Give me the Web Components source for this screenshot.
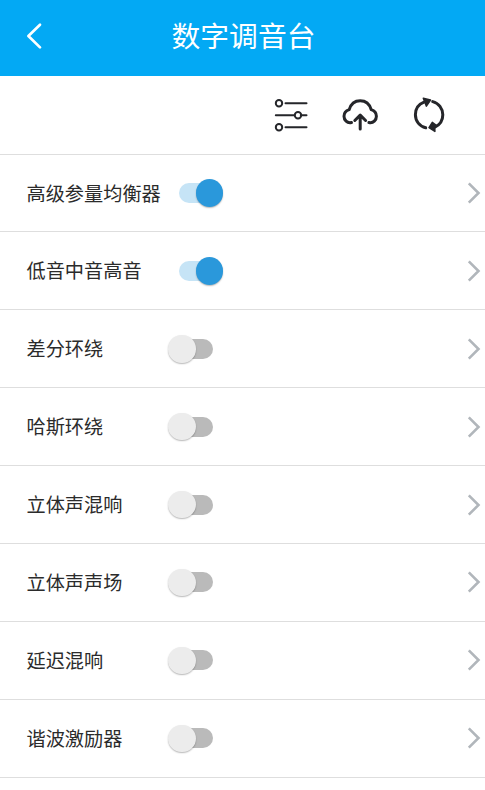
<!DOCTYPE html>
<html lang="zh-CN">
<head>
<meta charset="utf-8">
<meta name="viewport" content="width=device-width, initial-scale=1">
<title>数字调音台</title>
<style>
  body {
    margin: 0;
    background: #fff;
    color: #2b2b2b;
    font-family: "Noto Sans CJK SC", sans-serif;
  }
</style>
</head>
<body>
<mixer-page>
  <mixer-header slot="header">数字调音台</mixer-header>
  <mixer-toolbar slot="toolbar"></mixer-toolbar>
  <mixer-item on>高级参量均衡器</mixer-item>
  <mixer-item on>低音中音高音</mixer-item>
  <mixer-item>差分环绕</mixer-item>
  <mixer-item>哈斯环绕</mixer-item>
  <mixer-item>立体声混响</mixer-item>
  <mixer-item>立体声声场</mixer-item>
  <mixer-item>延迟混响</mixer-item>
  <mixer-item>谐波激励器</mixer-item>
</mixer-page>

<script>
function attach(host, html) {
  const template = document.createElement("template");
  template.innerHTML = html;
  host
    .attachShadow({ mode: "open" })
    .appendChild(template.content.cloneNode(true));
}

class MixerPage extends HTMLElement {
  constructor() {
    super();
    attach(this, `
      <style>
        :host { display: flex; flex-direction: column; height: 790px; overflow: hidden; }
      </style>
      <slot name="header"></slot>
      <slot name="toolbar"></slot>
      <slot></slot>
    `);
  }
}

customElements.define("mixer-page", MixerPage);

class MixerHeader extends HTMLElement {
  constructor() {
    super();
    attach(this, `
      <style>
        :host {
          display: grid;
          grid-template-columns: 60px 1fr 58px;
          align-items: center;
          flex: none;
          height: 76.4px;
          background: #03a9f4;
          color: #fff;
        }
        .title {
          font-size: 28.8px;
          line-height: 42px;
          text-align: center;
          padding-bottom: 7px;
          white-space: nowrap;
        }
        svg { display: block; margin: 0 0 5px 22px; }
      </style>
      <svg width="24" height="30" viewBox="0 0 24 30" fill="none" stroke="#fff" stroke-width="2.7" stroke-linecap="round" stroke-linejoin="round">
        <path d="M18 3.800 6.400 15 18 26.400"/>
      </svg>
      <div class="title"><slot></slot></div>
    `);
  }
}

customElements.define("mixer-header", MixerHeader);

class MixerToolbar extends HTMLElement {
  constructor() {
    super();
    attach(this, `
      <style>
        :host {
          display: flex;
          align-items: center;
          justify-content: flex-end;
          gap: 29px;
          flex: none;
          box-sizing: border-box;
          height: 78.2px;
          padding-right: 36px;
          border-bottom: 1px solid #dedede;
        }
        svg {
          display: block;
          fill: none;
          stroke: #25262a;
          stroke-linecap: round;
          stroke-linejoin: round;
        }
      </style>
      <svg width="40" height="40" viewBox="0 0 40 40" stroke-width="2">
        <path d="M14.500 8.300h21M4.800 20.300h18.400M29.800 20.300h5.700M14.500 32.300h21"/>
        <circle cx="8" cy="8.300" r="3.200"/>
        <circle cx="27" cy="20.300" r="3.200"/>
        <circle cx="8" cy="32.300" r="3.200"/>
      </svg>
      <svg width="40" height="40" viewBox="0 0 40 40" stroke-width="3">
        <path d="M11.500 27.500C7 28.500 4 25 4 21.200c0-3.500 2.200-5.500 5.200-6.500C11 8.500 15.300 5.800 20.200 5.800s9.200 2.700 11 8.900c3 1 5.200 3 5.200 6.500 0 3.800-3 7.300-7.500 6.300"/>
        <path d="M20.200 34V20.500M14.800 25.500l5.400-5.400 5.400 5.400"/>
      </svg>
      <svg width="40" height="40" viewBox="0 0 40 40" stroke-width="3">
        <path d="M16.700 32.800C10.600 31.400 6.400 26 6.400 19.800c0-5.800 3.400-10.600 8.600-12.600M23.700 6.600C29.600 8 33.800 13.500 33.800 19.800c0 5.600-3.300 10.400-8.300 12.500"/>
        <path fill="#25262a" stroke-width="1.500" d="m14.300 3.300 7.200 1.700-4.100 6.200zM20 32.600l5.900 3.800-.2-3.800 1.600-2.200-4-3z"/>
      </svg>
    `);
  }
}

customElements.define("mixer-toolbar", MixerToolbar);

class MixerSwitch extends HTMLElement {
  constructor() {
    super();
    this.setAttribute("role", "switch");
    attach(this, `
      <style>
        :host { display: flex; align-items: center; width: 55px; height: 28px; }
        .track {
          display: flex;
          align-items: center;
          box-sizing: border-box;
          width: 34px;
          height: 20px;
          margin: 0 auto;
          border-radius: 10px;
          background: #bababa;
        }
        .thumb {
          flex: none;
          width: 27.4px;
          height: 27.4px;
          margin-left: -10.4px;
          border-radius: 50%;
          background: #ececec;
          box-shadow: 0 1px 1.5px rgba(0, 0, 0, .28);
        }
        :host([checked]) .track { background: #c6e4f6; }
        :host([checked]) .thumb { margin-left: 17px; background: #2a98db; }
      </style>
      <div class="track"><div class="thumb"></div></div>
    `);
  }
}

customElements.define("mixer-switch", MixerSwitch);

class MixerItem extends HTMLElement {
  constructor() {
    super();
    attach(this, `
      <style>
        :host {
          display: grid;
          grid-template-columns: 141.5px 55px 1fr;
          align-items: center;
          flex: none;
          box-sizing: border-box;
          height: 77.9px;
          padding: 0 4px 0 26.5px;
          border-bottom: 1px solid #dedede;
        }
        .label {
          padding-bottom: 1px;
          font-size: 19.2px;
          line-height: 28px;
          white-space: nowrap;
        }
        svg { display: block; justify-self: end; }
      </style>
      <div class="label"><slot></slot></div>
      <mixer-switch></mixer-switch>
      <svg width="14" height="24" viewBox="0 0 14 24" fill="none" stroke="#b1b6bb" stroke-width="2.6">
        <path d="m1.800 2.300 9.700 9.700-9.700 9.700"/>
      </svg>
    `);
    this.toggle = this.shadowRoot.querySelector("mixer-switch");
  }

  connectedCallback() {
    this.setChecked(this.hasAttribute("on"));
    this.toggle.addEventListener("click", () => {
      this.setChecked(!this.toggle.hasAttribute("checked"));
    });
  }

  setChecked(isChecked) {
    this.toggle.toggleAttribute("checked", isChecked);
    this.toggle.setAttribute("aria-checked", `${isChecked}`);
  }
}

customElements.define("mixer-item", MixerItem);
</script>
</body>
</html>
